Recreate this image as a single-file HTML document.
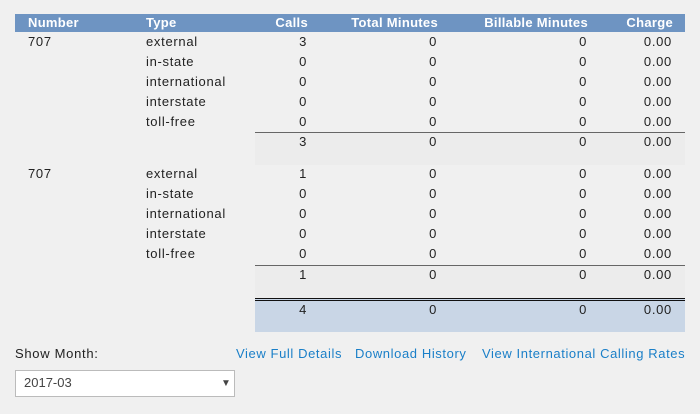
<!DOCTYPE html>
<html><head><style>
body{margin:0;width:700px;height:414px;background:#f0f0f0;font-family:"Liberation Sans",sans-serif;font-size:13px;color:#222;position:relative;overflow:hidden;letter-spacing:0.7px}
.a{position:absolute;white-space:nowrap;line-height:20px}
.r{text-align:right}
.hd{position:absolute;left:15px;top:14px;width:670px;height:18px;background:#6e94c2}
.h{color:#fff;font-weight:bold;line-height:18px;top:14px;letter-spacing:0.3px}
.sub{position:absolute;left:255px;width:430px;background:#ececec;border-top:1px solid #666}
.tot{position:absolute;left:255px;top:298px;width:430px;height:34px;background:#c9d6e6;border-top:3px double #111;box-sizing:border-box}
a{color:#1a7fc8;text-decoration:none;letter-spacing:0.6px}
</style></head><body>
<div class="hd"></div>
<div class="a h" style="left:28px">Number</div>
<div class="a h" style="left:146px">Type</div>
<div class="a h r" style="right:392px">Calls</div>
<div class="a h r" style="right:262px">Total Minutes</div>
<div class="a h r" style="right:112px">Billable Minutes</div>
<div class="a h r" style="right:27px">Charge</div>

<div class="sub" style="top:132px;height:32px"></div>
<div class="sub" style="top:265px;height:32px"></div>
<div class="tot"></div>

<div id="rows"></div>
<script>
var rows=[
[32,'707','external','3'],[52,'','in-state','0'],[72,'','international','0'],[92,'','interstate','0'],[112,'','toll-free','0'],[132,'','','3'],
[164,'707','external','1'],[184,'','in-state','0'],[204,'','international','0'],[224,'','interstate','0'],[244,'','toll-free','0'],[265,'','','1'],[300,'','','4']];
var h='';
rows.forEach(function(r){var t=r[0];
if(r[1])h+='<div class="a" style="left:28px;top:'+t+'px">'+r[1]+'</div>';
if(r[2])h+='<div class="a" style="left:146px;top:'+t+'px">'+r[2]+'</div>';
h+='<div class="a r" style="right:393px;top:'+t+'px">'+r[3]+'</div>';
h+='<div class="a r" style="right:263px;top:'+t+'px">0</div>';
h+='<div class="a r" style="right:113px;top:'+t+'px">0</div>';
h+='<div class="a r" style="right:28px;top:'+t+'px">0.00</div>';});
document.getElementById('rows').innerHTML=h;
</script>
<div class="a" style="left:15px;top:344px">Show Month:</div>
<div class="a" style="left:236px;top:344px"><a>View Full Details</a></div>
<div class="a" style="left:355px;top:344px"><a>Download History</a></div>
<div class="a" style="left:482px;top:344px"><a>View International Calling Rates</a></div>
<div style="position:absolute;left:15px;top:370px;width:218px;height:25px;background:#fff;border:1px solid #bbb"></div>
<div class="a" style="left:24px;top:373px;color:#444;letter-spacing:0">2017-03</div>
<div class="a" style="left:221px;top:374px;font-size:10px;color:#444">▼</div>
</body></html>
